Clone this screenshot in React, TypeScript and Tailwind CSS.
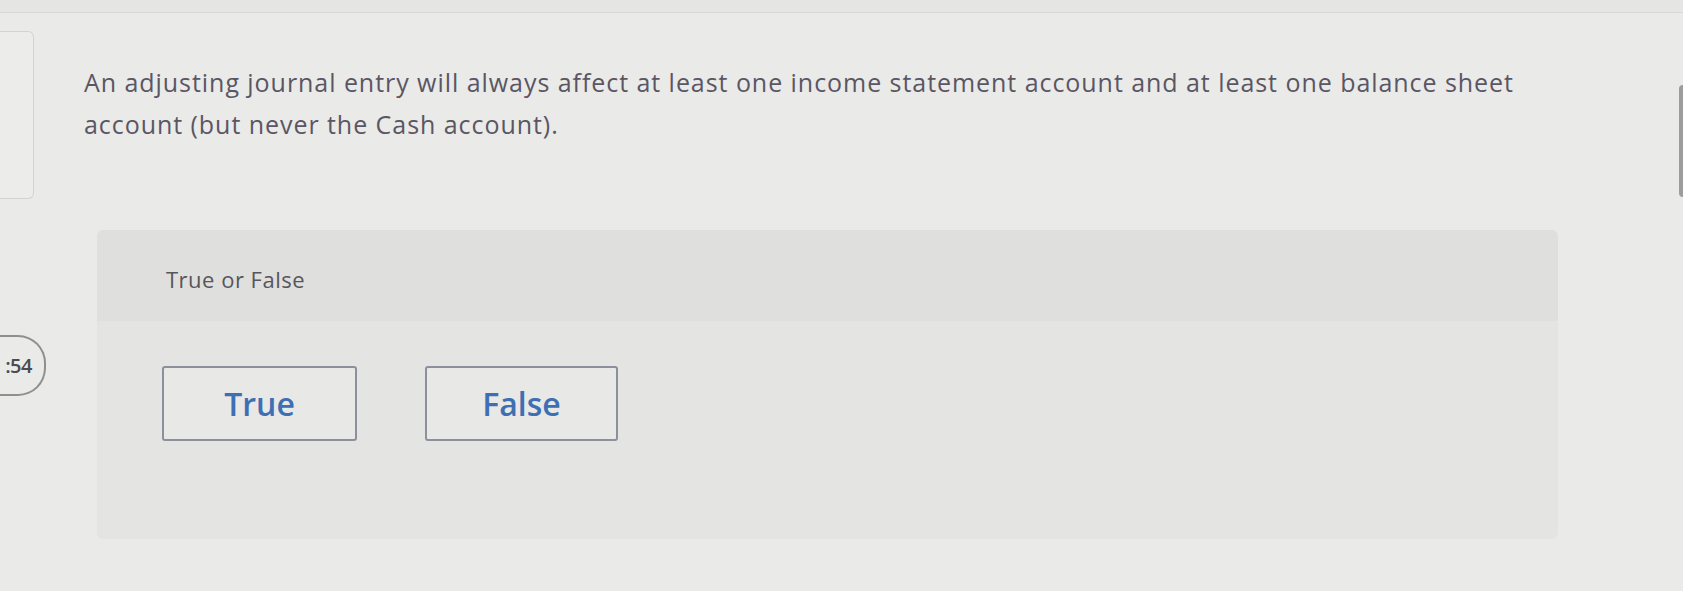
import React from "react";

const font = { fontFamily: "'Open Sans', Lato, sans-serif" };

export default function App() {
  return (
    <div
      className="h-[591px] w-full overflow-hidden bg-[#eaeae8] flex flex-col"
      style={font}
    >
      {/* top strip */}
      <div className="h-[13px] shrink-0 bg-[#e5e5e3] border-b border-[#d9d9d7]" />

      <div className="flex flex-1">
        {/* left rail: nav card + timer */}
        <div className="w-[46px] shrink-0 flex flex-col">
          <div className="mt-[18px] h-[168px] w-[34px] rounded-r-md border border-l-0 border-[#d3d3d1] bg-[#ececea]" />
          <div className="mt-[136px] h-[61px] w-[46px] rounded-r-[28px] border-2 border-l-0 border-[#8f8f8d] flex items-center justify-end pr-[12px]">
            <span className="text-[20px] font-semibold text-[#4b4b52] tracking-tight">
              :54
            </span>
          </div>
        </div>

        {/* question content */}
        <div className="flex-1 flex flex-col">
          <p className="ml-[38px] mt-[48px] w-[1470px] text-[25px] leading-[42px] tracking-[0.95px] text-[#5a5664]">
            An adjusting journal entry will always affect at least one income
            statement account and at least one balance sheet account (but
            never the Cash account).
          </p>

          <div className="ml-[51px] mt-[85px] w-[1461px] h-[309px] rounded-md bg-[#e4e4e2] flex flex-col overflow-hidden">
            <div className="h-[91px] bg-[#dfdfdd] pl-[69px] pt-[37px]">
              <span className="text-[22px] leading-[24px] tracking-[0.5px] text-[#56565c]">
                True or False
              </span>
            </div>
            <div className="flex gap-[68px] pl-[65px] pt-[45px]">
              <button className="h-[75px] w-[195px] rounded-[3px] border-2 border-[#8c909c] bg-[#e8e8e6] text-[32px] font-semibold text-[#3e6fb4]">
                True
              </button>
              <button className="h-[75px] w-[193px] rounded-[3px] border-2 border-[#8c909c] bg-[#e8e8e6] text-[32px] font-semibold text-[#3e6fb4]">
                False
              </button>
            </div>
          </div>
        </div>

        {/* edge of the neighbouring card */}
        <div className="w-[4px] shrink-0">
          <div className="mt-[72px] h-[112px] w-[4px] rounded-l-sm bg-[#9c9c9a]" />
        </div>
      </div>
    </div>
  );
}
